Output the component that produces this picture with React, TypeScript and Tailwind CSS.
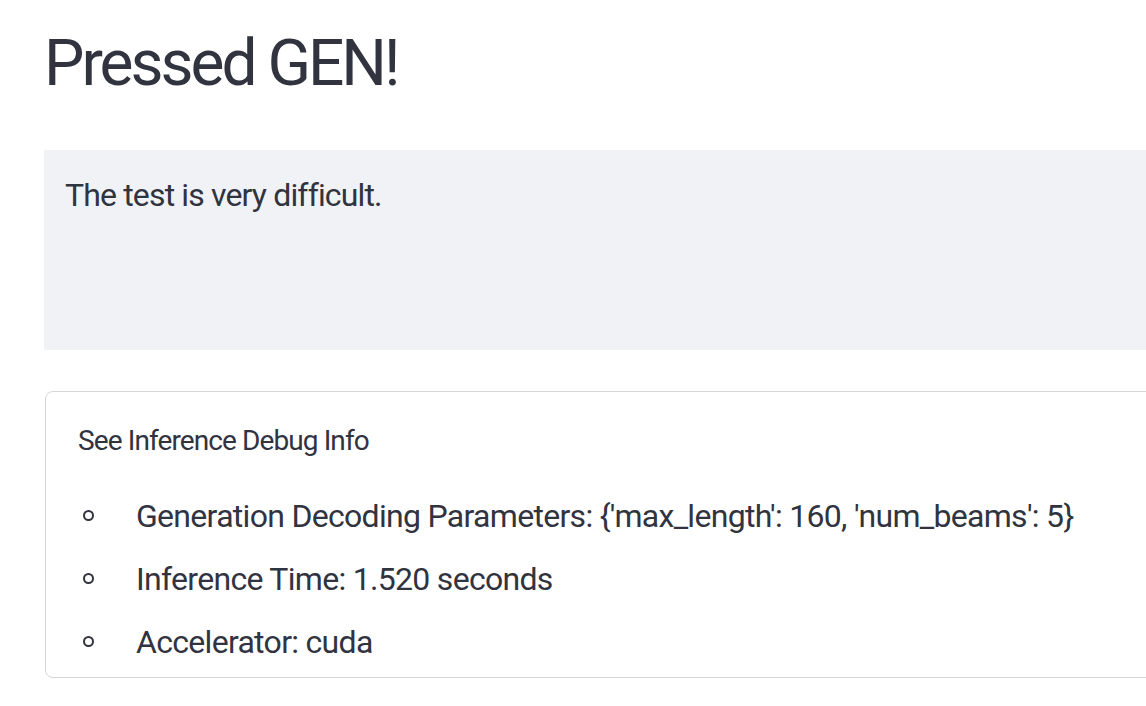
import React from 'react';

const items = [
  "Generation Decoding Parameters: {'max_length': 160, 'num_beams': 5}",
  'Inference Time: 1.520 seconds',
  'Accelerator: cuda',
];

export default function App() {
  return (
    <div
      className="w-full h-[706px] overflow-hidden bg-white text-[#31333f]"
      style={{ fontFamily: 'Roboto, "Noto Sans", sans-serif' }}
    >
      <div className="w-[1300px] pl-[44px]">
        <h1 className="pt-[22px] text-[64px] leading-[84px] font-normal tracking-[-3px]">Pressed GEN!</h1>

        <div className="mt-[44px] h-[200px] bg-[#f0f2f6] px-[21px] pt-[21px] text-[32px] leading-[48px] tracking-[-0.85px]">
          The test is very difficult.
        </div>

        <div className="mt-[41px] ml-px h-[287px] rounded-[8px] border border-[#d6d6d9] pl-[32px] pt-[29px]">
          <div className="text-[28px] leading-[40px] tracking-[-0.9px]">See Inference Debug Info</div>
          <ul className="mt-[23px] flex flex-col">
            {items.map((item) => (
              <li key={item} className="flex h-[63px] items-center text-[32px] tracking-[-0.7px]">
                <span className="ml-[5px] mr-[42px] h-[11px] w-[11px] rounded-full border-2 border-[#31333f]" />
                <span>{item}</span>
              </li>
            ))}
          </ul>
        </div>
      </div>
    </div>
  );
}
